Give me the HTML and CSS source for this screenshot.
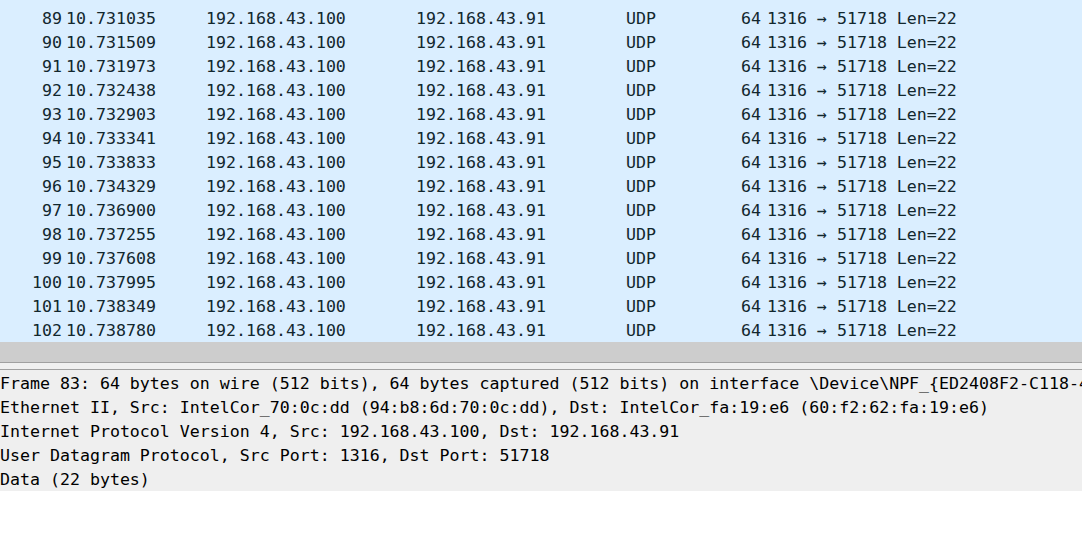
FILE: index.html
```html
<!DOCTYPE html>
<html lang="en">
<head>
  <meta charset="UTF-8">
  <meta name="viewport" content="width=device-width, initial-scale=1.0">
  <title>Wireshark</title>
  <link rel="stylesheet" href="styles.css">
</head>
<body>
  <div class="packet-list">
    <div class="row"><span class="num">89</span><span>10.731035</span><span>192.168.43.100</span><span>192.168.43.91</span><span>UDP</span><span class="len">64</span><span>1316 → 51718 Len=22</span></div>
    <div class="row"><span class="num">90</span><span>10.731509</span><span>192.168.43.100</span><span>192.168.43.91</span><span>UDP</span><span class="len">64</span><span>1316 → 51718 Len=22</span></div>
    <div class="row"><span class="num">91</span><span>10.731973</span><span>192.168.43.100</span><span>192.168.43.91</span><span>UDP</span><span class="len">64</span><span>1316 → 51718 Len=22</span></div>
    <div class="row"><span class="num">92</span><span>10.732438</span><span>192.168.43.100</span><span>192.168.43.91</span><span>UDP</span><span class="len">64</span><span>1316 → 51718 Len=22</span></div>
    <div class="row"><span class="num">93</span><span>10.732903</span><span>192.168.43.100</span><span>192.168.43.91</span><span>UDP</span><span class="len">64</span><span>1316 → 51718 Len=22</span></div>
    <div class="row"><span class="num">94</span><span>10.733341</span><span>192.168.43.100</span><span>192.168.43.91</span><span>UDP</span><span class="len">64</span><span>1316 → 51718 Len=22</span></div>
    <div class="row"><span class="num">95</span><span>10.733833</span><span>192.168.43.100</span><span>192.168.43.91</span><span>UDP</span><span class="len">64</span><span>1316 → 51718 Len=22</span></div>
    <div class="row"><span class="num">96</span><span>10.734329</span><span>192.168.43.100</span><span>192.168.43.91</span><span>UDP</span><span class="len">64</span><span>1316 → 51718 Len=22</span></div>
    <div class="row"><span class="num">97</span><span>10.736900</span><span>192.168.43.100</span><span>192.168.43.91</span><span>UDP</span><span class="len">64</span><span>1316 → 51718 Len=22</span></div>
    <div class="row"><span class="num">98</span><span>10.737255</span><span>192.168.43.100</span><span>192.168.43.91</span><span>UDP</span><span class="len">64</span><span>1316 → 51718 Len=22</span></div>
    <div class="row"><span class="num">99</span><span>10.737608</span><span>192.168.43.100</span><span>192.168.43.91</span><span>UDP</span><span class="len">64</span><span>1316 → 51718 Len=22</span></div>
    <div class="row"><span class="num">100</span><span>10.737995</span><span>192.168.43.100</span><span>192.168.43.91</span><span>UDP</span><span class="len">64</span><span>1316 → 51718 Len=22</span></div>
    <div class="row"><span class="num">101</span><span>10.738349</span><span>192.168.43.100</span><span>192.168.43.91</span><span>UDP</span><span class="len">64</span><span>1316 → 51718 Len=22</span></div>
    <div class="row"><span class="num">102</span><span>10.738780</span><span>192.168.43.100</span><span>192.168.43.91</span><span>UDP</span><span class="len">64</span><span>1316 → 51718 Len=22</span></div>
  </div>
  <div class="hscroll"></div>
  <div class="splitter"></div>
  <div class="details">
    <div class="line">Frame 83: 64 bytes on wire (512 bits), 64 bytes captured (512 bits) on interface \Device\NPF_{ED2408F2-C118-4</div>
    <div class="line">Ethernet II, Src: IntelCor_70:0c:dd (94:b8:6d:70:0c:dd), Dst: IntelCor_fa:19:e6 (60:f2:62:fa:19:e6)</div>
    <div class="line">Internet Protocol Version 4, Src: 192.168.43.100, Dst: 192.168.43.91</div>
    <div class="line">User Datagram Protocol, Src Port: 1316, Dst Port: 51718</div>
    <div class="line">Data (22 bytes)</div>
  </div>
</body>
</html>
```

FILE: styles.css
```css
body {
  margin: 0;
  background-color: white;
  font-family: "DejaVu Sans Mono", "Liberation Mono", monospace;
  font-size: 16.6px;
  overflow: hidden;
}
.packet-list {
  background-color: #daeeff;
  color: #12272e;
  padding-top: 6px;
}
.row {
  display: grid;
  grid-template-columns: 62px 144px 210px 210px 80px 55px 1fr;
  height: 23px;
  padding-top: 1px;
  line-height: 24px;
  white-space: nowrap;
}
.row span:nth-child(2) {
  padding-left: 4px;
}
.num,
.len {
  text-align: right;
}
.row span:last-child {
  padding-left: 6px;
}
.hscroll {
  height: 20px;
  background-color: #cdcdcd;
  border-bottom: 1px solid #a0a0a0;
}
.splitter {
  height: 6px;
  background-color: #f0f0f0;
  border-bottom: 1px solid #a0a0a0;
}
.details {
  background-color: #efefef;
  color: #000;
  padding-top: 1px;
}
.line {
  height: 23px;
  padding-top: 1px;
  line-height: 24px;
  white-space: nowrap;
  overflow: hidden;
}
```
